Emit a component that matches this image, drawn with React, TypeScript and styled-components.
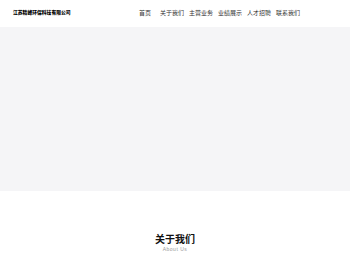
import React from "react";
import styled, { createGlobalStyle } from "styled-components";

const Global = createGlobalStyle`
  html, body { margin: 0; padding: 0; background: #ffffff; }
  body { font-family: "Noto Sans CJK SC", "Noto Sans", sans-serif; }
  * { box-sizing: border-box; }
`;

const Header = styled.header`
  height: 27px;
  display: flex;
  align-items: center;
  padding: 0 50px 0 13px;
  background: #ffffff;
`;

const Logo = styled.div`
  font-size: 4.8px;
  font-weight: 900;
  color: #000;
  line-height: 1;
  margin-top: -3px;
`;

const Nav = styled.nav`
  margin-left: auto;
  display: flex;
  align-items: center;
  gap: 5px;
`;

const NavItem = styled.a<{ $wide?: boolean }>`
  font-size: 6px;
  color: #333;
  line-height: 1;
  text-decoration: none;
  margin-top: -1px;
  margin-right: ${(p) => (p.$wide ? "4px" : "0")};
`;

const Banner = styled.section`
  height: 164px;
  background: #f5f5f7;
`;

const Section = styled.section`
  display: flex;
  flex-direction: column;
  align-items: center;
  padding-top: 42px;
`;

const Title = styled.h2`
  margin: 0;
  font-size: 10px;
  font-weight: 700;
  color: #111;
  line-height: 12px;
`;

const Subtitle = styled.div`
  font-family: "Liberation Sans", Arial, sans-serif;
  font-size: 5px;
  color: #999;
  letter-spacing: 0.5px;
  line-height: 6px;
  margin-top: 1px;
`;

const items = ["首页", "关于我们", "主营业务", "业绩展示", "人才招聘", "联系我们"];

export default function App() {
  return (
    <>
      <Global />
      <Header>
        <Logo>江苏精峰环保科技有限公司</Logo>
        <Nav>
          {items.map((t, i) => (
            <NavItem key={t} $wide={i === 0}>
              {t}
            </NavItem>
          ))}
        </Nav>
      </Header>
      <Banner />
      <Section>
        <Title>关于我们</Title>
        <Subtitle>About Us</Subtitle>
      </Section>
    </>
  );
}
